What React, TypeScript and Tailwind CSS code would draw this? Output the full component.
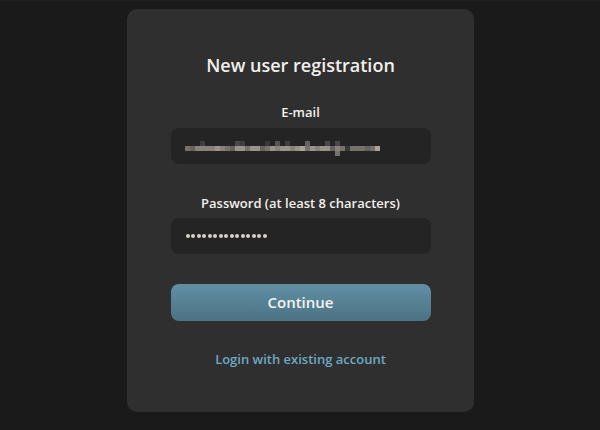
import React from 'react'

// pixelated (censored) e-mail address, 5px blocks
const topRow = '00030000004300002050300060004040000000'
const midRow = '76888898769979967989989a79899687177767a'
const lowRow = '000000000000000000000000000000700000000'

const shade: Record<string, string> = {
  '0': 'transparent',
  '1': '#3a3938',
  '2': '#37363a',
  '3': '#403f3e',
  '4': '#4a4846',
  '5': '#575450',
  '6': '#66625d',
  '7': '#76716a',
  '8': '#88827a',
  '9': '#9a938a',
  a: '#aaa398',
}

function Pixelated() {
  return (
    <div className="flex flex-col">
      {[topRow, midRow, lowRow].map((row, r) => (
        <div key={r} className="flex">
          {row.split('').map((c, i) => (
            <span key={i} className="block w-[5px] h-[5px]" style={{ background: shade[c] }} />
          ))}
        </div>
      ))}
    </div>
  )
}

export default function App() {
  return (
    <div
      className="w-[600px] h-[430px] bg-[#1a1a1a] border-t border-[#202020] flex justify-center pt-[8px]"
      style={{ fontFamily: '"Open Sans", "Noto Sans", sans-serif' }}
    >
      <div className="w-[347px] h-[403px] bg-[#2f2f2f] rounded-[10px] flex flex-col items-center pt-[43px] pl-[1px]">
        <h1 className="text-[18px] font-semibold text-[#f2f0ec] leading-[26px]">New user registration</h1>

        <label className="mt-[25px] text-[13px] font-semibold text-[#f2f0ec] leading-[18px]">E-mail</label>
        <div className="mt-[7px] w-[260px] h-[36px] rounded-[8px] bg-[#242424] flex items-center pl-[14px] pt-[4px]">
          <Pixelated />
        </div>

        <label className="mt-[30px] text-[13px] font-semibold text-[#f2f0ec] leading-[18px]">
          Password (at least 8 characters)
        </label>
        <div className="mt-[6px] w-[260px] h-[36px] rounded-[8px] bg-[#242424] flex items-center pl-[15px] gap-[1.5px]">
          {Array.from({ length: 15 }).map((_, i) => (
            <span key={i} className="block w-[4px] h-[4px] rounded-full bg-[#d6d2ca]" />
          ))}
        </div>

        <button className="mt-[30px] w-[260px] h-[37px] rounded-[8px] bg-gradient-to-b from-[#6190a5] to-[#4c7284] text-[15px] font-semibold text-[#f4f4f2]">
          Continue
        </button>

        <a className="mt-[29px] text-[13px] font-semibold text-[#6fa8c4] leading-[18px] cursor-pointer">
          Login with existing account
        </a>
      </div>
    </div>
  )
}
